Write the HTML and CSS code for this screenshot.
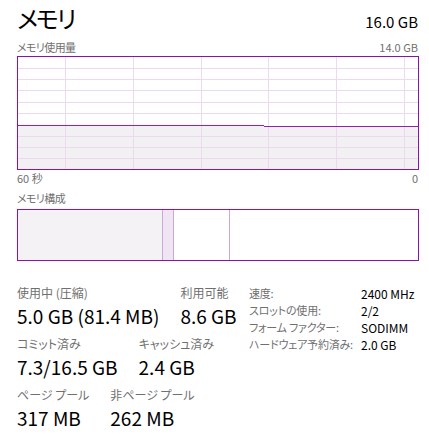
FILE: index.html
```html
<!DOCTYPE html>
<html lang="ja">
<head>
<meta charset="utf-8">
<title>メモリ</title>
<link rel="stylesheet" href="styles.css">
</head>
<body>
<div class="page">
  <div class="header">
    <span class="title">メモリ</span>
    <span class="total">16.0 GB</span>
  </div>
  <div class="axis"><span class="jp">メモリ使用量</span><span>14.0 GB</span></div>
  <div class="chart">
    <svg width="400" height="112" viewBox="0 0 400 112">
      <path d="M0 68.5 H246 V69.5 H400 V112 H0 Z" fill="#f3f0f4"/>
      <g stroke="#ead9ef" stroke-width="1" fill="none">
        <path d="M0 11.5H400M0 22.5H400M0 33.5H400M0 45.5H400M0 56.5H400M0 79.5H400M0 90.5H400M0 101.5H400"/>
        <path d="M47.5 0V112M115.5 0V112M183.5 0V112M250.5 0V112M318.5 0V112M386.5 0V112"/>
      </g>
      <path d="M0 68.5 H246 M246 69.5 H400" stroke="#9222b6" stroke-width="1" fill="none"/>
    </svg>
  </div>
  <div class="axis axis-bottom"><span>60 秒</span><span>0</span></div>
  <div class="axis axis-section"><span class="jp">メモリ構成</span></div>
  <div class="comp">
    <div class="seg seg-used"></div>
    <div class="seg seg-mod"></div>
    <div class="seg seg-standby"></div>
    <div class="seg seg-free"></div>
  </div>
  <div class="stats">
    <div class="stats-left">
      <div class="stat-row">
        <div class="stat"><div class="label">使用中 (圧縮)</div><div class="value">5.0 GB (81.4 MB)</div></div>
        <div class="stat"><div class="label">利用可能</div><div class="value">8.6 GB</div></div>
      </div>
      <div class="stat-row">
        <div class="stat"><div class="label">コミット済み</div><div class="value">7.3/16.5 GB</div></div>
        <div class="stat"><div class="label">キャッシュ済み</div><div class="value">2.4 GB</div></div>
      </div>
      <div class="stat-row">
        <div class="stat"><div class="label">ページ プール</div><div class="value">317 MB</div></div>
        <div class="stat"><div class="label">非ページ プール</div><div class="value">262 MB</div></div>
      </div>
    </div>
    <div class="props">
      <div class="prop-label">速度:</div><div class="prop-value">2400 MHz</div>
      <div class="prop-label">スロットの使用:</div><div class="prop-value">2/2</div>
      <div class="prop-label">フォーム ファクター:</div><div class="prop-value">SODIMM</div>
      <div class="prop-label">ハードウェア予約済み:</div><div class="prop-value">2.0 GB</div>
    </div>
  </div>
</div>
</body>
</html>
```

FILE: styles.css
```css
html, body {
  margin: 0;
  padding: 0;
  background: #ffffff;
}
body {
  font-family: "Noto Sans CJK JP", "Noto Sans", sans-serif;
  font-feature-settings: "palt";
  color: #000;
}
.page {
  width: 402px;
  padding: 0 10px 0 17px;
}
.header {
  height: 40px;
  display: flex;
  justify-content: space-between;
  align-items: baseline;
}
.title {
  font-size: 24px;
  line-height: 34px;
  padding-top: 1px;
  letter-spacing: -2px;
}
.total {
  font-size: 15px;
  line-height: 20px;
  margin-right: 1px;
}
.axis {
  display: flex;
  justify-content: space-between;
  font-size: 11px;
  line-height: 14px;
  height: 14px;
  color: #707070;
}
.axis .jp { letter-spacing: -0.6px; }
.axis span:last-child { margin-right: 1px; }
.chart {
  margin-top: 2px;
  width: 400px;
  height: 112px;
  border: 1px solid #8b12ae;
}
.chart svg { display: block; }
.axis-bottom { margin-top: 1px; }
.axis-section { margin-top: 6px; }
.comp {
  margin-top: 4px;
  width: 400px;
  height: 50px;
  border: 1px solid #8b12ae;
  display: flex;
}
.seg { height: 100%; }
.seg-used { width: 144px; background: #f4f2f5; border-right: 1px solid #cca8d8; }
.seg-mod { width: 10px; background: #efe5f3; border-right: 1px solid #cca8d8; }
.seg-standby { width: 55px; background: #fff; border-right: 1px solid #cca8d8; }
.seg-free { flex: 1; background: #fff; }
.stats {
  margin-top: 24px;
  display: flex;
}
.stats-left {
  width: 232px;
  display: flex;
  flex-direction: column;
  gap: 8px;
}
.stat-row {
  display: flex;
  gap: 21px;
}
.label {
  font-size: 12px;
  line-height: 16px;
  color: #707070;
  margin-bottom: 3px;
}
.value {
  font-size: 19px;
  line-height: 24px;
  color: #000;
}
.props {
  display: grid;
  grid-template-columns: 112px auto;
  grid-auto-rows: 17px;
  line-height: 17px;
}
.prop-label { color: #707070; font-size: 11px; letter-spacing: -0.2px; }
.prop-value { color: #000; font-size: 12px; }
```
